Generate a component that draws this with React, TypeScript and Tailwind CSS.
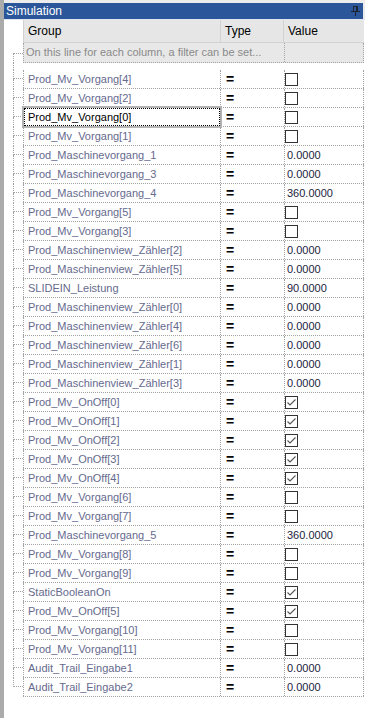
import React from "react";

type Val = boolean | string;
interface Row { name: string; value: Val; selected?: boolean }

const rows: Row[] = [
  { name: "Prod_Mv_Vorgang[4]", value: false },
  { name: "Prod_Mv_Vorgang[2]", value: false },
  { name: "Prod_Mv_Vorgang[0]", value: false, selected: true },
  { name: "Prod_Mv_Vorgang[1]", value: false },
  { name: "Prod_Maschinevorgang_1", value: "0.0000" },
  { name: "Prod_Maschinevorgang_3", value: "0.0000" },
  { name: "Prod_Maschinevorgang_4", value: "360.0000" },
  { name: "Prod_Mv_Vorgang[5]", value: false },
  { name: "Prod_Mv_Vorgang[3]", value: false },
  { name: "Prod_Maschinenview_Zähler[2]", value: "0.0000" },
  { name: "Prod_Maschinenview_Zähler[5]", value: "0.0000" },
  { name: "SLIDEIN_Leistung", value: "90.0000" },
  { name: "Prod_Maschinenview_Zähler[0]", value: "0.0000" },
  { name: "Prod_Maschinenview_Zähler[4]", value: "0.0000" },
  { name: "Prod_Maschinenview_Zähler[6]", value: "0.0000" },
  { name: "Prod_Maschinenview_Zähler[1]", value: "0.0000" },
  { name: "Prod_Maschinenview_Zähler[3]", value: "0.0000" },
  { name: "Prod_Mv_OnOff[0]", value: true },
  { name: "Prod_Mv_OnOff[1]", value: true },
  { name: "Prod_Mv_OnOff[2]", value: true },
  { name: "Prod_Mv_OnOff[3]", value: true },
  { name: "Prod_Mv_OnOff[4]", value: true },
  { name: "Prod_Mv_Vorgang[6]", value: false },
  { name: "Prod_Mv_Vorgang[7]", value: false },
  { name: "Prod_Maschinevorgang_5", value: "360.0000" },
  { name: "Prod_Mv_Vorgang[8]", value: false },
  { name: "Prod_Mv_Vorgang[9]", value: false },
  { name: "StaticBooleanOn", value: true },
  { name: "Prod_Mv_OnOff[5]", value: true },
  { name: "Prod_Mv_Vorgang[10]", value: false },
  { name: "Prod_Mv_Vorgang[11]", value: false },
  { name: "Audit_Trail_Eingabe1", value: "0.0000" },
  { name: "Audit_Trail_Eingabe2", value: "0.0000" },
];

const dot = "border-dotted border-[#a3a3a3]";

function Check({ on }: { on: boolean }) {
  return (
    <span className="flex h-[13px] w-[13px] items-center justify-center border border-[#333333] bg-white">
      {on && (
        <svg width="11" height="11" viewBox="0 0 11 11">
          <polyline points="1.5,5.5 4,8 9.5,2.5" fill="none" stroke="#555555" strokeWidth="1.1" />
        </svg>
      )}
    </span>
  );
}

// dotted tree connector left of each row
function Gutter({ last }: { last: boolean }) {
  return (
    <div className="flex w-[19px] shrink-0">
      <div className="w-[9px]" />
      <div className="flex w-[10px] flex-col">
        <div className={`h-[9px] border-b border-l ${dot}`} />
        <div className={`flex-1 ${last ? "" : `border-l ${dot}`}`} />
      </div>
    </div>
  );
}

function Pin() {
  return (
    <svg width="9" height="10" viewBox="0 0 9 10">
      <rect x="2.5" y="0.5" width="4" height="5" fill="none" stroke="#1b2433" />
      <line x1="0" y1="5.5" x2="9" y2="5.5" stroke="#1b2433" />
      <line x1="4.5" y1="6" x2="4.5" y2="10" stroke="#1b2433" />
      <line x1="5.5" y1="1" x2="5.5" y2="5" stroke="#1b2433" />
    </svg>
  );
}

export default function App() {
  return (
    <div className="flex h-[718px] w-[365px] bg-white font-['Liberation_Sans',Arial,sans-serif] text-[11px] leading-none">
      <div className="w-[4px] shrink-0 bg-[#ababab]" />
      <div className="flex min-w-0 flex-1 flex-col">
        <div className="h-[3px] bg-[#ececec]" />
        <div className="flex">
          <div className="flex h-[16px] flex-1 items-center justify-between bg-[#2b579a] pl-[2px] pr-[3px] text-[12px] text-white">
            <span>Simulation</span>
            <Pin />
          </div>
          <div className="w-[2px] bg-[#ececec]" />
        </div>
        <div className="h-px bg-[#dfe6f1]" />

        {/* header */}
        <div className="flex pr-[1px]">
          <div className="w-[19px] shrink-0" />
          <div className="flex h-[23px] flex-1 border-b border-l border-[#d2d2d2] bg-[#e6e6e6] text-[12px] text-black">
            <div className="flex w-[196px] items-center pl-[4px]">Group</div>
            <div className="flex w-[63px] items-center border-l border-[#d2d2d2] pl-[4px]">Type</div>
            <div className="flex flex-1 items-center border-l border-[#d2d2d2] pl-[4px]">Value</div>
          </div>
        </div>

        {/* filter line */}
        <div className="flex h-[20px] pr-[1px]">
          <div className="flex w-[19px] shrink-0">
            <div className="w-[9px]" />
            <div className="flex w-[10px] flex-col">
              <div className={`h-[11px] border-b ${dot}`} />
              <div className={`flex-1 border-l ${dot}`} />
            </div>
          </div>
          <div className={`flex flex-1 border-b border-l border-r bg-[#e8e8e8] text-[#8a8a8a] ${dot}`}>
            <div className="flex w-[260px] items-center pl-[2px]">On this line for each column, a filter can be set...</div>
            <div className={`flex-1 border-l ${dot}`} />
          </div>
        </div>

        <div className="flex h-[7px]">
          <div className="w-[9px]" />
          <div className={`border-l ${dot}`} />
        </div>

        {rows.map((r, i) => {
          const last = i === rows.length - 1;
          return (
            <div key={r.name} className="flex h-[19px] pr-[1px]">
              <Gutter last={last} />
              <div className={`flex flex-1 border-b ${dot}`}>
                <div className={`flex w-[197px] border-l ${dot}`}>
                  {r.selected ? (
                    <div className="flex flex-1 items-center border border-dotted border-black pl-[3px] text-black outline-2 outline-[#b4b4b4]">
                      {r.name}
                    </div>
                  ) : (
                    <div className="flex flex-1 items-center pl-[4px] text-[#666a8e]">{r.name}</div>
                  )}
                </div>
                <div className={`flex w-[64px] items-center border-l pl-[5px] text-[14px] font-bold text-black ${dot}`}>=</div>
                <div className={`flex flex-1 items-center border-l border-r ${dot}`}>
                  {typeof r.value === "boolean" ? (
                    <Check on={r.value} />
                  ) : (
                    <span className="pl-[2px] text-[#1c2340]">{r.value}</span>
                  )}
                </div>
              </div>
            </div>
          );
        })}
      </div>
    </div>
  );
}
